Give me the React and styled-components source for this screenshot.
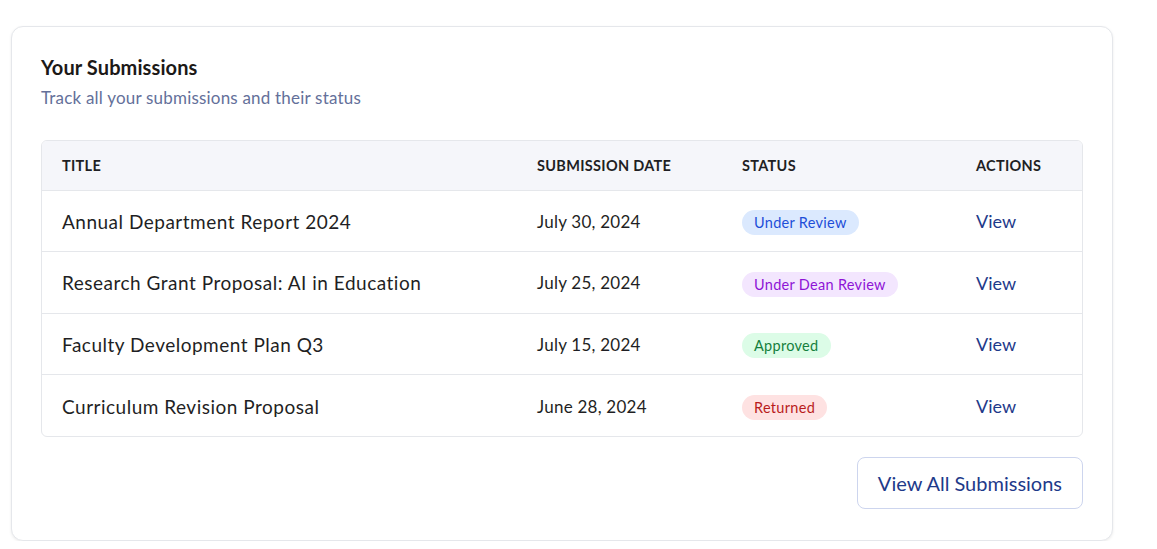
import React from 'react';
import styled, { createGlobalStyle } from 'styled-components';

const GlobalStyle = createGlobalStyle`
  * { box-sizing: border-box; }
  body {
    margin: 0;
    background: #ffffff;
    font-family: Lato, "Open Sans", sans-serif;
  }
`;

const Page = styled.div`
  padding: 26px 0 0 11px;
`;

const Card = styled.section`
  width: 1102px;
  background: #fff;
  border: 1px solid #e5e7eb;
  border-radius: 12px;
  box-shadow: 0 1px 3px rgba(0, 0, 0, 0.08);
  padding: 27px 29px 31px;
`;

const Heading = styled.h2`
  margin: 0;
  font-size: 20px;
  line-height: 26px;
  font-weight: 700;
  letter-spacing: 0.1px;
  color: #1c1917;
`;

const Sub = styled.p`
  margin: 7px 0 0;
  font-size: 17px;
  line-height: 22px;
  letter-spacing: 0.2px;
  color: #64709a;
`;

const TableWrap = styled.div`
  margin-top: 31px;
  border: 1px solid #e5e7eb;
  border-radius: 6px;
  overflow: hidden;
`;

const Table = styled.table`
  width: 100%;
  border-collapse: collapse;
  table-layout: fixed;
`;

const Th = styled.th`
  width: ${(p) => p.$w}px;
  text-align: left;
  background: #f5f6fa;
  height: 49px;
  padding: 0 20px;
  font-size: 14.5px;
  font-weight: 700;
  letter-spacing: 0.3px;
  text-transform: uppercase;
  color: #1f1f24;
  border-bottom: 1px solid #e5e7eb;
`;

const Row = styled.tr`
  & + & td { border-top: 1px solid #e5e7eb; }
`;

const Td = styled.td`
  height: 61.5px;
  padding: 1px 20px 0;
  vertical-align: middle;
  font-size: ${(p) => (p.$big ? 19 : 17)}px;
  letter-spacing: ${(p) => (p.$big ? 0.5 : 0.24)}px;
  color: #1f1f24;
`;

const tones = {
  blue: { bg: '#dbe9fe', fg: '#1d4ed8' },
  purple: { bg: '#f3e6fe', fg: '#8e14d6' },
  green: { bg: '#dcfce7', fg: '#15803d' },
  red: { bg: '#fee2e2', fg: '#b91c1c' },
};

const Badge = styled.span`
  display: inline-block;
  padding: 4px 12px;
  border-radius: 999px;
  font-size: 14.5px;
  line-height: 17px;
  letter-spacing: 0.3px;
  margin-top: 3px;
  background: ${(p) => tones[p.$tone].bg};
  color: ${(p) => tones[p.$tone].fg};
`;

const ViewLink = styled.a`
  font-size: 18px;
  letter-spacing: 0;
  color: #1e3a8a;
  text-decoration: none;
  cursor: pointer;
`;

const Footer = styled.div`
  display: flex;
  justify-content: flex-end;
  margin-top: 20px;
`;

const Button = styled.button`
  height: 52px;
  padding: 0 20px;
  background: #fff;
  border: 1px solid #cdd5ee;
  border-radius: 8px;
  font-family: inherit;
  font-size: 20px;
  color: #1e3a8a;
  cursor: pointer;
`;

const rows = [
  { title: 'Annual Department Report 2024', date: 'July 30, 2024', status: 'Under Review', tone: 'blue' },
  { title: 'Research Grant Proposal: AI in Education', date: 'July 25, 2024', status: 'Under Dean Review', tone: 'purple' },
  { title: 'Faculty Development Plan Q3', date: 'July 15, 2024', status: 'Approved', tone: 'green' },
  { title: 'Curriculum Revision Proposal', date: 'June 28, 2024', status: 'Returned', tone: 'red' },
];

export default function App() {
  return (
    <Page>
      <GlobalStyle />
      <Card>
        <Heading>Your Submissions</Heading>
        <Sub>Track all your submissions and their status</Sub>
        <TableWrap>
          <Table>
            <thead>
              <tr>
                <Th $w={475}>Title</Th>
                <Th $w={205}>Submission Date</Th>
                <Th $w={234}>Status</Th>
                <Th>Actions</Th>
              </tr>
            </thead>
            <tbody>
              {rows.map((r) => (
                <Row key={r.title}>
                  <Td $big>{r.title}</Td>
                  <Td>{r.date}</Td>
                  <Td>
                    <Badge $tone={r.tone}>{r.status}</Badge>
                  </Td>
                  <Td>
                    <ViewLink>View</ViewLink>
                  </Td>
                </Row>
              ))}
            </tbody>
          </Table>
        </TableWrap>
        <Footer>
          <Button>View All Submissions</Button>
        </Footer>
      </Card>
    </Page>
  );
}
